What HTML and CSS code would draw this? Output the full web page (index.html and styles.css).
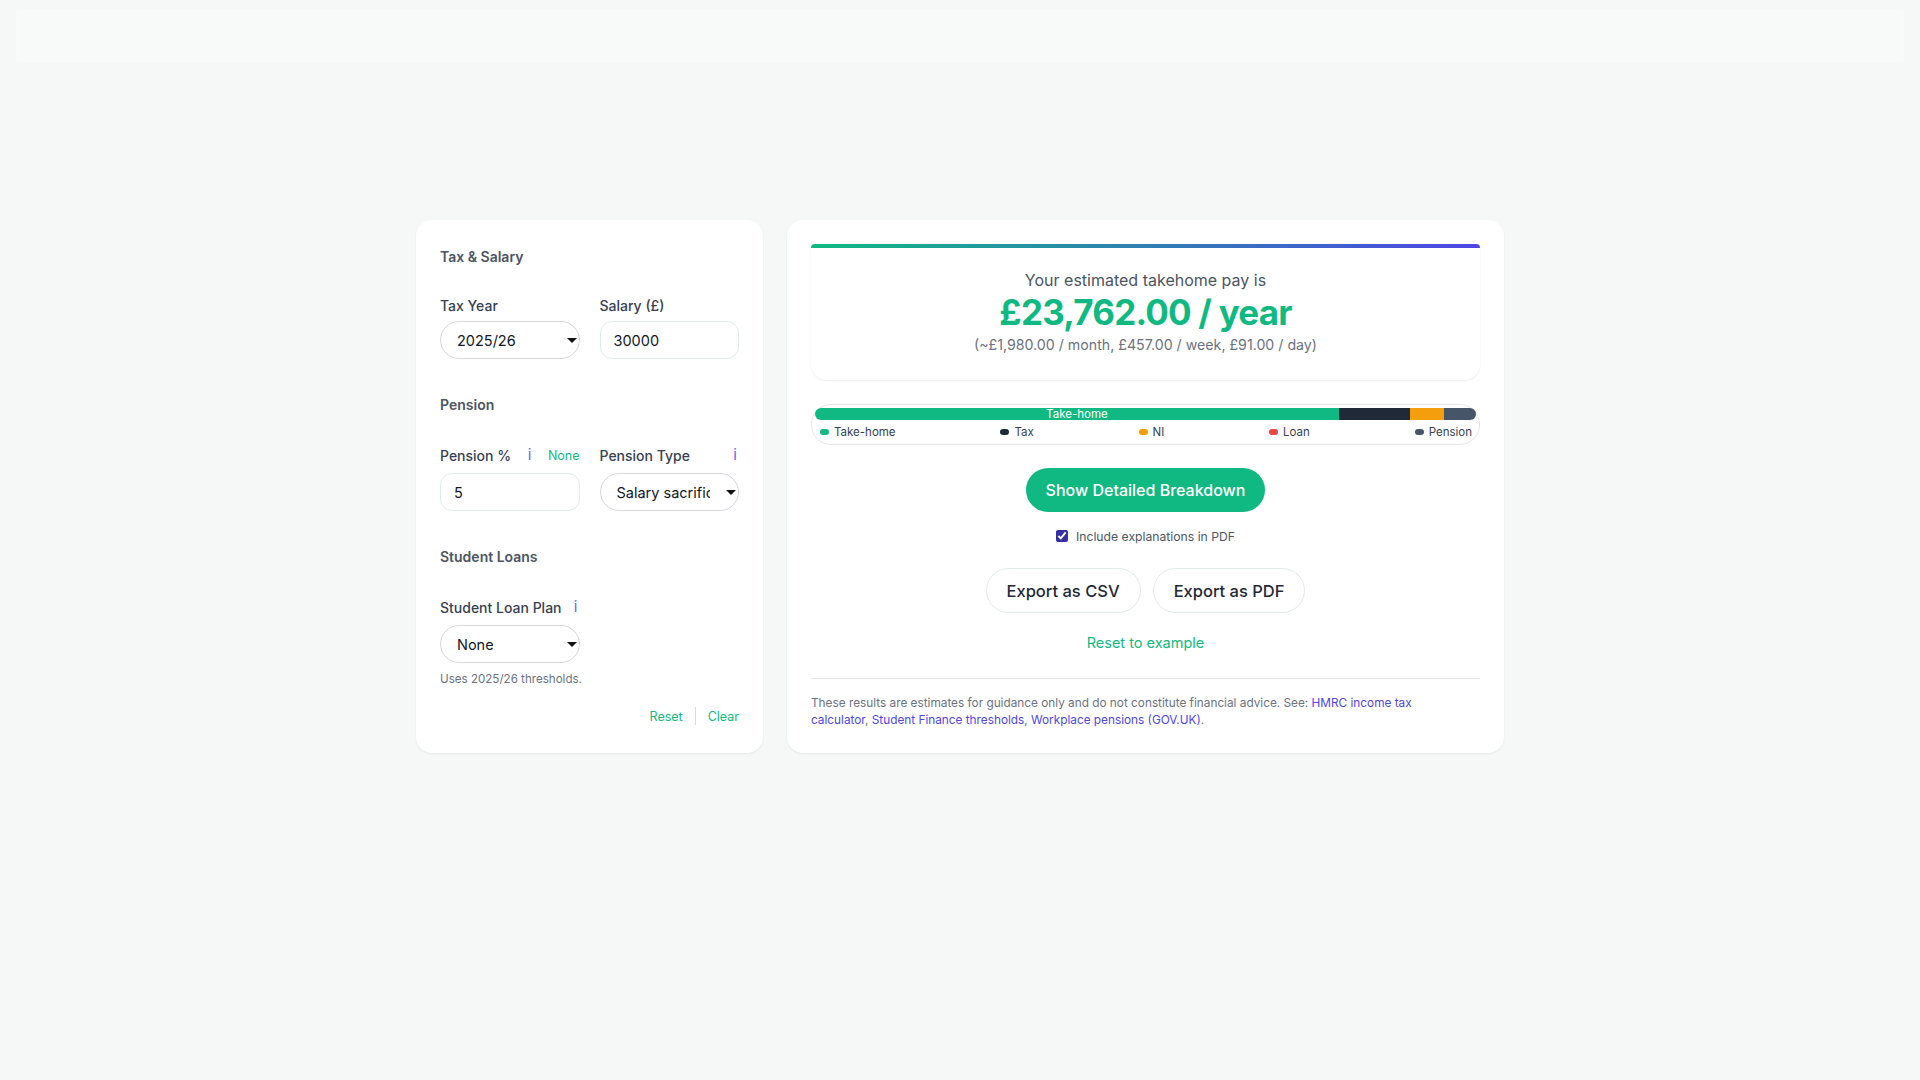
FILE: index.html
```html
<!DOCTYPE html>
<html lang="en">
<head>
<meta charset="utf-8">
<title>Take-home pay calculator</title>
<link rel="stylesheet" href="styles.css">
</head>
<body>
<header class="topbar"></header>
<main class="layout">
  <section class="card inputs">
    <div class="group">
      <h2 class="group-title">Tax &amp; Salary</h2>
      <div class="grid2">
        <div class="field">
          <div class="label-row"><label>Tax Year</label></div>
          <div class="select-wrap"><select class="select"><option>2025/26</option></select></div>
        </div>
        <div class="field">
          <div class="label-row"><label>Salary (£)</label></div>
          <input class="input" type="text" value="30000">
        </div>
      </div>
    </div>
    <div class="group">
      <h2 class="group-title">Pension</h2>
      <div class="grid2">
        <div class="field">
          <div class="label-row tall"><label>Pension %</label><span class="info">i</span><a class="mini-link">None</a></div>
          <input class="input" type="text" value="5">
        </div>
        <div class="field">
          <div class="label-row tall"><label>Pension Type</label><span class="info">i</span></div>
          <div class="select-wrap"><select class="select"><option>Salary sacrifice</option></select></div>
        </div>
      </div>
    </div>
    <div class="group">
      <h2 class="group-title">Student Loans</h2>
      <div class="grid2">
        <div class="field">
          <div class="label-row tall"><label>Student Loan Plan</label><span class="info">i</span></div>
          <div class="select-wrap"><select class="select"><option>None</option></select></div>
        </div>
      </div>
      <p class="note">Uses 2025/26 thresholds.</p>
    </div>
    <div class="card-actions">
      <a class="text-link">Reset</a>
      <span class="sep"></span>
      <a class="text-link">Clear</a>
    </div>
  </section>

  <section class="card results">
    <div class="result-head">
      <div class="accent"></div>
      <div class="result-body">
        <p class="result-intro">Your estimated takehome pay is</p>
        <p class="result-amount">£23,762.00 / year</p>
        <p class="result-sub">(~£1,980.00 / month, £457.00 / week, £91.00 / day)</p>
      </div>
    </div>

    <div class="breakdown">
      <div class="bar">
        <div class="seg seg-take" style="width:79.24%">Take-home</div>
        <div class="seg seg-tax" style="width:10.76%"></div>
        <div class="seg seg-ni" style="width:5.15%"></div>
        <div class="seg seg-pension" style="width:4.85%"></div>
      </div>
      <div class="legend">
        <span class="key"><i class="sw sw-take"></i>Take-home</span>
        <span class="key"><i class="sw sw-tax"></i>Tax</span>
        <span class="key"><i class="sw sw-ni"></i>NI</span>
        <span class="key"><i class="sw sw-loan"></i>Loan</span>
        <span class="key"><i class="sw sw-pension"></i>Pension</span>
      </div>
    </div>

    <div class="actions">
      <button class="btn-primary">Show Detailed Breakdown</button>
      <label class="check"><input type="checkbox" checked> Include explanations in PDF</label>
      <div class="export-row">
        <button class="btn-outline">Export as CSV</button>
        <button class="btn-outline">Export as PDF</button>
      </div>
      <a class="reset-example">Reset to example</a>
    </div>

    <div class="disclaimer">
      <p>These results are estimates for guidance only and do not constitute financial advice. See: <a>HMRC income tax calculator</a>, <a>Student Finance thresholds</a>, <a>Workplace pensions (GOV.UK)</a>.</p>
    </div>
  </section>
</main>
</body>
</html>
```

FILE: styles.css
```css
* { box-sizing: border-box; }

html, body {
  margin: 0;
  padding: 0;
}

body {
  background: #f5f8f7;
  font-family: Inter, "Noto Sans", "Liberation Sans", sans-serif;
  color: #111827;
  min-height: 1080px;
}

.topbar {
  height: 52px;
  margin: 10px 16px 0;
  background: #f7faf9;
  border: 1px solid #f9fbfb;
  border-radius: 4px;
}

.layout {
  width: 1088px;
  margin: 158px auto 0;
  display: grid;
  grid-template-columns: 347px 1fr;
  gap: 24px;
  align-items: stretch;
}

.card {
  background: #ffffff;
  border-radius: 16px;
  box-shadow: 0 1px 2px rgba(16, 24, 40, 0.07);
  padding: 24px;
}

/* Left card */
.group + .group { margin-top: 36px; }

.group-title {
  margin: 3px 0 28px;
  font-size: 14px;
  line-height: 20px;
  font-weight: 600;
  color: #4b5563;
}

.grid2 {
  display: grid;
  grid-template-columns: 1fr 1fr;
  column-gap: 20px;
}

.label-row {
  display: flex;
  justify-content: space-between;
  align-items: center;
  height: 20px;
  margin-bottom: 6px;
}

.label-row.tall { height: 24px; }

.label-row label {
  font-size: 14px;
  font-weight: 500;
  color: #374151;
}

.info {
  font-size: 15px;
  line-height: 24px;
  color: #6366f1;
  padding: 0 2px;
}

.mini-link {
  font-size: 12.5px;
  color: #10b981;
}

.select-wrap {
  position: relative;
}

.select-wrap::after {
  content: "";
  position: absolute;
  right: 3px;
  top: 50%;
  margin-top: -2px;
  border-left: 5px solid transparent;
  border-right: 5px solid transparent;
  border-top: 5px solid #111111;
  pointer-events: none;
}

.select, .input {
  display: block;
  width: 100%;
  height: 38px;
  font-family: Inter, "Noto Sans", sans-serif;
  font-size: 14.5px;
  color: #111827;
  background: #ffffff;
  margin: 0;
}

.select {
  appearance: none;
  -webkit-appearance: none;
  border: 1px solid #d4d7dc;
  border-radius: 999px;
  padding: 0 28px 0 16px;
}

.input {
  border: 1px solid #e3ebe8;
  border-radius: 12px;
  padding: 0 13px;
  outline: none;
}

.note {
  margin: 8px 0 0;
  font-size: 11.6px;
  line-height: 16px;
  color: #6b7280;
}

.card-actions {
  display: flex;
  justify-content: flex-end;
  align-items: center;
  gap: 12px;
  height: 24px;
  margin-top: 17px;
}

.text-link {
  font-size: 12.5px;
  color: #10b981;
}

.sep {
  width: 1px;
  height: 18px;
  background: #d8dcdf;
}

/* Right card */
.accent {
  height: 4px;
  border-radius: 4px 4px 0 0;
  background: linear-gradient(90deg, #10b981, #4f46e5);
}

.result-body {
  padding: 20px 24px 24px;
  border-radius: 0 0 16px 16px;
  box-shadow: 0 1px 2px rgba(16, 24, 40, 0.08);
  text-align: center;
}

.result-body p { margin: 0; }

.result-intro {
  font-size: 16px;
  line-height: 24px;
  color: #4b5563;
}

.result-amount {
  font-size: 35px;
  line-height: 40px;
  font-weight: 700;
  letter-spacing: -0.8px;
  color: #10b981;
}

.result-sub {
  margin-top: 2px !important;
  font-size: 14.2px;
  line-height: 22px;
  color: #6b7280;
}

.breakdown {
  margin-top: 24px;
  border: 1px solid #e5e7eb;
  border-radius: 20px;
  padding: 3px 3px 4px;
}

.bar {
  display: flex;
  height: 12px;
  border-radius: 6px;
  overflow: hidden;
}

.seg {
  height: 12px;
  font-size: 11.5px;
  line-height: 12px;
  color: #ffffff;
  text-align: center;
  white-space: nowrap;
}

.seg-take { background: #10b981; }
.seg-tax { background: #1f2937; }
.seg-ni { background: #f59e0b; }
.seg-pension { background: #475569; }

.legend {
  display: flex;
  justify-content: space-between;
  margin-top: 4px;
  padding: 0 4px 0 5px;
  height: 16px;
  align-items: center;
}

.key {
  display: inline-flex;
  align-items: center;
  gap: 5px;
  font-size: 11.5px;
  color: #374151;
}

.sw {
  display: inline-block;
  width: 9px;
  height: 6px;
  border-radius: 3px;
}

.sw-take { background: #10b981; }
.sw-tax { background: #1f2937; }
.sw-ni { background: #f59e0b; }
.sw-loan { background: #ef4444; }
.sw-pension { background: #475569; }

.actions {
  display: flex;
  flex-direction: column;
  align-items: center;
}

.btn-primary {
  margin-top: 23px;
  height: 44px;
  padding: 0 20px;
  border: none;
  border-radius: 999px;
  background: #10b981;
  color: #ffffff;
  font-family: Inter, "Noto Sans", sans-serif;
  font-size: 16px;
  font-weight: 500;
}

.check {
  margin-top: 14px;
  height: 20px;
  display: flex;
  align-items: center;
  gap: 8px;
  font-size: 12.2px;
  color: #4b5563;
}

.check input {
  margin: 0;
  width: 12px;
  height: 12px;
  accent-color: #3730a3;
}

.export-row {
  margin-top: 22px;
  display: flex;
  gap: 12px;
}

.btn-outline {
  height: 45px;
  padding: 0 20px;
  border: 1px solid #e3ebe8;
  border-radius: 999px;
  background: #ffffff;
  color: #1f2937;
  font-family: Inter, "Noto Sans", sans-serif;
  font-size: 16.5px;
  font-weight: 500;
}

.reset-example {
  margin-top: 20px;
  font-size: 14.5px;
  line-height: 20px;
  color: #10b981;
}

.disclaimer {
  margin-top: 25px;
  border-top: 1px solid #e5e7eb;
  padding-top: 16px;
}

.disclaimer p {
  margin: 0;
  max-width: 620px;
  font-size: 11.8px;
  line-height: 17px;
  color: #6b7280;
}

.disclaimer a { color: #4f46e5; }
```
